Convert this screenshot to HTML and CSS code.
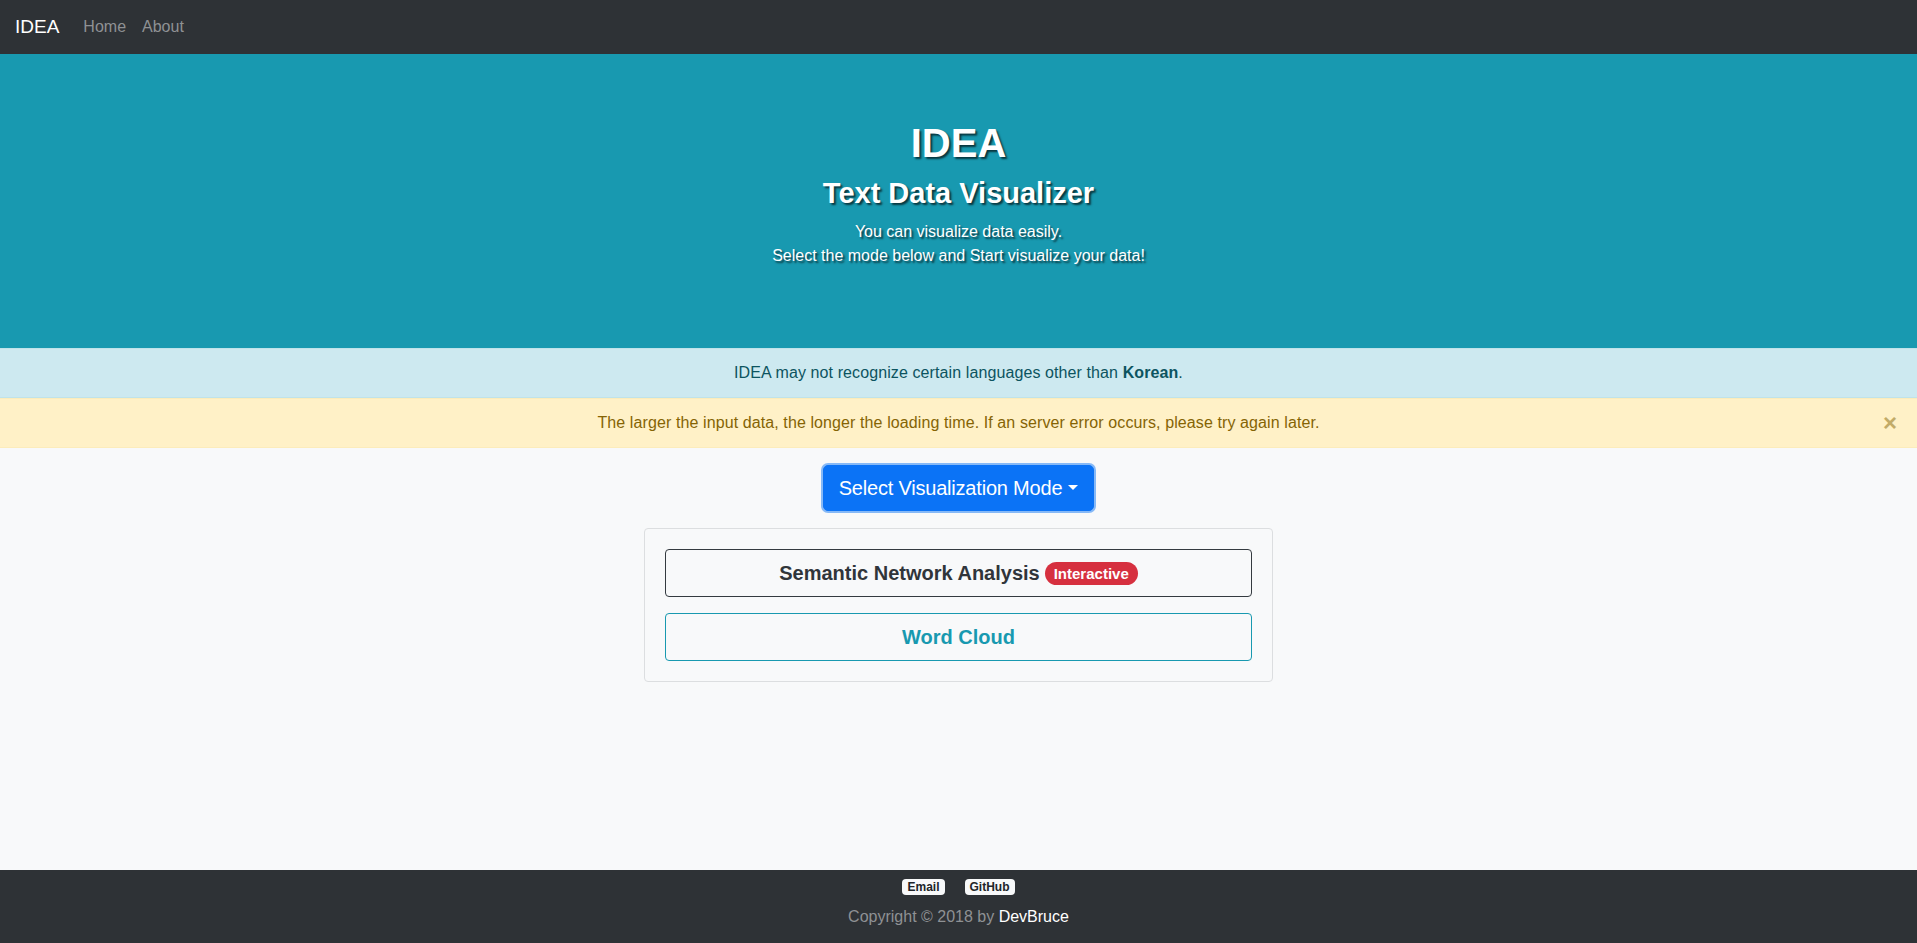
FILE: index.html
```html
<!DOCTYPE html>
<html lang="en">
<head>
<meta charset="utf-8">
<title>IDEA - Text Data Visualizer</title>
<link rel="stylesheet" href="styles.css">
</head>
<body>
<nav class="navbar">
  <a class="brand" href="#">IDEA</a>
  <a class="nav-link" href="#">Home</a>
  <a class="nav-link" href="#">About</a>
</nav>
<header class="hero">
  <h1 class="hero-title">IDEA</h1>
  <h3 class="hero-sub">Text Data Visualizer</h3>
  <p class="hero-text">You can visualize data easily.<br>Select the mode below and Start visualize your data!</p>
</header>
<div class="alert alert-info">IDEA may not recognize certain languages other than <b>Korean</b>.</div>
<div class="alert alert-warning">The larger the input data, the longer the loading time. If an server error occurs, please try again later.<span class="close">&times;</span></div>
<main class="main">
  <button class="btn-select">Select Visualization Mode<span class="caret"></span></button>
  <div class="card">
    <button class="mode-btn mode-dark">Semantic Network Analysis <span class="badge-pill">Interactive</span></button>
    <button class="mode-btn mode-info">Word Cloud</button>
  </div>
</main>
<footer class="footer">
  <div class="badges">
    <a class="badge-light" href="#">Email</a>
    <a class="badge-light" href="#">GitHub</a>
  </div>
  <div class="copy">Copyright © 2018 by <span class="author">DevBruce</span></div>
</footer>
</body>
</html>
```
FILE: styles.css
```css
* { box-sizing: border-box; }
html, body { margin: 0; padding: 0; }
body {
  font-family: "Liberation Sans", Arial, sans-serif;
  font-size: 16px;
  line-height: 24px;
  color: #212529;
  background: #f8f9fa;
  min-height: 100vh;
  display: flex;
  flex-direction: column;
}
a { text-decoration: none; }

.navbar {
  height: 54px;
  background: #2e3236;
  display: flex;
  align-items: center;
  padding: 0 15px;
}
.brand {
  color: #fff;
  font-size: 19px;
  line-height: 30px;
  margin-right: 16px;
}
.nav-link {
  color: #8f9194;
  font-size: 16px;
  padding: 0 8px;
}

.hero {
  background: #1899b0;
  color: #fff;
  text-align: center;
  padding: 65px 0 80px;
  text-shadow: 2px 2px 2px rgba(0,0,0,0.65);
}
.hero-title {
  margin: 0;
  font-size: 40px;
  line-height: 48px;
  font-weight: 700;
}
.hero-sub {
  margin: 9px 0 0;
  font-size: 29px;
  line-height: 34px;
  font-weight: 700;
}
.hero-text {
  margin: 10px 0 0;
  font-size: 16px;
  line-height: 24px;
}

.alert {
  position: relative;
  height: 50px;
  padding: 12px 20px;
  text-align: center;
  border-top: 1px solid transparent;
  border-bottom: 1px solid transparent;
  letter-spacing: 0.1px;
}
.alert-info {
  background: #cde9f0;
  color: #0c5460;
  border-color: #bfe3ea;
}
.alert-warning {
  background: #fff1c7;
  color: #856404;
  border-color: #fcecbb;
}
.close {
  position: absolute;
  right: 20px;
  top: 12px;
  font-size: 24px;
  font-weight: 700;
  line-height: 24px;
  color: #c2ab68;
}

.main {
  flex: 1;
  display: flex;
  flex-direction: column;
  align-items: center;
  padding-top: 17px;
}
.btn-select {
  font-family: inherit;
  font-size: 20px;
  line-height: 30px;
  letter-spacing: -0.2px;
  white-space: nowrap;
  color: #fff;
  background: #0b73f6;
  border: 1px solid #0b73f6;
  border-radius: 5px;
  padding: 7px 15px;
  box-shadow: 0 0 0 2px #86b9f7;
  display: flex;
  align-items: center;
  justify-content: center;
}
.caret {
  display: inline-block;
  margin-left: 6px;
  border-top: 5px solid #fff;
  border-left: 5px solid transparent;
  border-right: 5px solid transparent;
  margin-top: -2px;
}
.card {
  margin-top: 17px;
  width: 629px;
  border: 1px solid #dcdee0;
  border-radius: 4px;
  padding: 20px;
  display: flex;
  flex-direction: column;
  gap: 16px;
}
.mode-btn {
  font-family: inherit;
  font-size: 20px;
  font-weight: 700;
  line-height: 30px;
  height: 48px;
  background: transparent;
  border-radius: 4px;
  padding: 8px 16px;
  display: flex;
  align-items: center;
  justify-content: center;
}
.mode-dark {
  border: 1px solid #343a40;
  color: #30353a;
}
.mode-info {
  border: 1px solid #1899b0;
  color: #1899b0;
}
.badge-pill {
  display: inline-block;
  margin-left: 5px;
  background: #d6303f;
  color: #fff;
  font-size: 15px;
  line-height: 15px;
  font-weight: 700;
  padding: 4px 9px;
  border-radius: 12px;
}

.footer {
  height: 73px;
  background: #2e3236;
  text-align: center;
  padding-top: 9px;
}
.badges {
  display: flex;
  justify-content: center;
  gap: 20px;
}
.badge-light {
  display: inline-block;
  background: #f8f9fa;
  color: #212529;
  font-size: 12px;
  font-weight: 700;
  line-height: 12px;
  padding: 2px 5px;
  border-radius: 4px;
}
.copy {
  margin-top: 10px;
  color: #8e9194;
  font-size: 16px;
  line-height: 24px;
}
.author { color: #fff; }
```
